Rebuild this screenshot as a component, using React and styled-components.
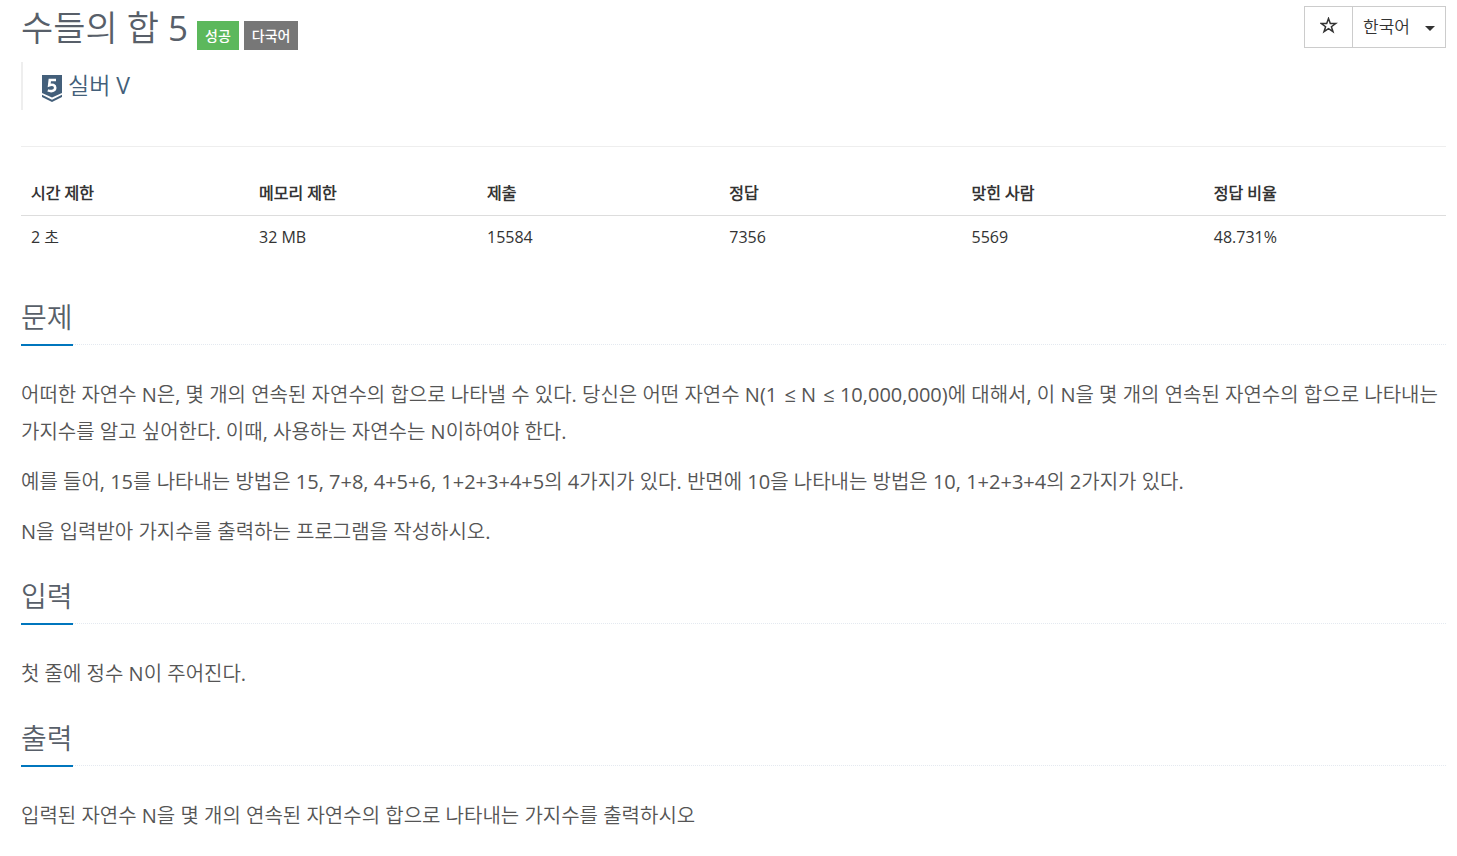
import React from 'react';
import styled, { createGlobalStyle } from 'styled-components';

const GlobalStyle = createGlobalStyle`
  * {
    box-sizing: border-box;
  }

  body {
    margin: 0;
    background: #fff;
    color: #333;
    font-family: 'Open Sans', 'Noto Sans CJK KR DemiLight', 'Noto Sans CJK KR', sans-serif;
    font-size: 16px;
    font-weight: 400;
    line-height: 24px;
  }
`;

const stats = [
  { label: '시간 제한', value: '2 초', width: 16 },
  { label: '메모리 제한', value: '32 MB', width: 16 },
  { label: '제출', value: '15584', width: 17 },
  { label: '정답', value: '7356', width: 17 },
  { label: '맞힌 사람', value: '5569', width: 17 },
  { label: '정답 비율', value: '48.731%', width: 17 },
];

const lessEqual = '\u200a≤';

const sections = [
  {
    title: '문제',
    paragraphs: [
      `어떠한 자연수 N은, 몇 개의 연속된 자연수의 합으로 나타낼 수 있다. 당신은 어떤 자연수 N(1 ${lessEqual} N ${lessEqual} 10,000,000)에 대해서, 이 N을 몇 개의 연속된 자연수의 합으로 나타내는 가지수를 알고 싶어한다. 이때, 사용하는 자연수는 N이하여야 한다.`,
      '예를 들어, 15를 나타내는 방법은 15, 7+8, 4+5+6, 1+2+3+4+5의 4가지가 있다. 반면에 10을 나타내는 방법은 10, 1+2+3+4의 2가지가 있다.',
      'N을 입력받아 가지수를 출력하는 프로그램을 작성하시오.',
    ],
  },
  { title: '입력', paragraphs: ['첫 줄에 정수 N이 주어진다.'] },
  {
    title: '출력',
    paragraphs: ['입력된 자연수 N을 몇 개의 연속된 자연수의 합으로 나타내는 가지수를 출력하시오'],
  },
];

const StarIcon = () => (
  <svg width='18' height='18' viewBox='0 0 18 18' fill='none' aria-hidden='true'>
    <path
      d='M8.5 1.5 L10.3 6.5 H15.7 L11.4 9.7 L13 14.7 L8.5 11.7 L4 14.7 L5.6 9.7 L1.3 6.5 H6.7 Z'
      stroke='#333'
      strokeWidth='1.5'
    />
  </svg>
);

const TierIcon = () => (
  <svg width='20' height='27' viewBox='0 0 20 27' aria-hidden='true'>
    <path d='M0 0 H20 V18 L10 22.5 L0 18 Z' fill='#435f7a' />
    <path d='M0 19.8 L10 24.8 L20 19.8 V22 L10 27 L0 22 Z' fill='#435f7a' />
    <path
      d='M14 5 H7.8 L7.2 10.2 C10.5 9 13.2 10 13.2 12.7 C13.2 15.8 9.6 16.9 5.8 15.4'
      fill='none'
      stroke='#fff'
      strokeWidth='2.6'
    />
  </svg>
);

export default function App() {
  return (
    <>
      <GlobalStyle />
      <Page>
        <Header>
          <div>
            <TitleRow>
              <Title>수들의 합 5</Title>
              <Badge $color='#5cb85c'>성공</Badge>
              <Badge $color='#777'>다국어</Badge>
            </TitleRow>
            <Tier>
              <TierIcon />
              <TierName>실버 V</TierName>
            </Tier>
          </div>
          <Toolbar>
            <StarButton type='button' aria-label='즐겨찾기'>
              <StarIcon />
            </StarButton>
            <LanguageField>
              <LanguageSelect aria-label='언어' defaultValue='ko'>
                <option value='ko'>한국어</option>
              </LanguageSelect>
              <Caret />
            </LanguageField>
          </Toolbar>
        </Header>
        <StatsTable>
          <thead>
            <tr>
              {stats.map(({ label, width }) => (
                <HeadCell key={label} scope='col' $width={width}>
                  {label}
                </HeadCell>
              ))}
            </tr>
          </thead>
          <tbody>
            <tr>
              {stats.map(({ label, value }) => (
                <Cell key={label}>{value}</Cell>
              ))}
            </tr>
          </tbody>
        </StatsTable>
        {sections.map(({ title, paragraphs }) => (
          <Section key={title}>
            <Headline>
              <HeadlineText>{title}</HeadlineText>
            </Headline>
            {paragraphs.map((text) => (
              <Paragraph key={text}>{text}</Paragraph>
            ))}
          </Section>
        ))}
      </Page>
    </>
  );
}

const Page = styled.main`
  padding: 6px 11px 0 21px;
`;

const Header = styled.header`
  display: flex;
  justify-content: space-between;
  align-items: flex-start;
  padding-bottom: 36px;
  border-bottom: 1px solid #eee;
`;

const TitleRow = styled.div`
  display: flex;
  align-items: flex-end;
  gap: 5px;
  height: 44px;
`;

const Title = styled.h1`
  margin: 0 4px 0 0;
  color: #585f69;
  font-size: 35px;
  font-weight: 400;
  line-height: 44px;
`;

const Badge = styled.span`
  padding: 0 8px;
  background: ${(props) => props.$color};
  color: #fff;
  font-family: 'Noto Sans CJK KR', sans-serif;
  font-size: 14px;
  font-weight: 500;
  line-height: 29px;
`;

const Tier = styled.div`
  display: flex;
  align-items: flex-start;
  gap: 6px;
  height: 48px;
  margin-top: 12px;
  padding: 13px 0 0 19px;
  border-left: 2px solid #eee;
  color: #435f7a;
  font-size: 23px;
`;

const TierName = styled.span`
  line-height: 20px;
`;

const Toolbar = styled.div`
  display: flex;
  height: 42px;
  border: 1px solid #ccc;
`;

const StarButton = styled.button`
  display: flex;
  align-items: center;
  justify-content: center;
  width: 48px;
  padding: 0 0 2px;
  border: 0;
  border-right: 1px solid #ccc;
  background: #fff;
  cursor: pointer;
`;

const LanguageField = styled.div`
  position: relative;
  display: flex;
`;

const LanguageSelect = styled.select`
  appearance: none;
  padding: 0 35px 2px 10px;
  border: 0;
  border-radius: 0;
  background: #fff;
  color: #333;
  font-family: inherit;
  font-size: 17px;
  font-weight: 400;
  cursor: pointer;
`;

const Caret = styled.span`
  position: absolute;
  top: 19px;
  right: 10px;
  border: 5px solid transparent;
  border-top-color: #333;
  border-bottom: 0;
  pointer-events: none;
`;

const StatsTable = styled.table`
  width: 100%;
  margin: 24px 0 41px;
  border-collapse: collapse;
  table-layout: fixed;
`;

const HeadCell = styled.th`
  width: ${(props) => props.$width}%;
  padding: 10px;
  border-bottom: 1px solid #ddd;
  font-weight: 600;
  text-align: left;
`;

const Cell = styled.td`
  padding: 9px 10px 10px;
`;

const Section = styled.section`
  margin-bottom: 29px;
`;

const Headline = styled.div`
  display: flex;
  margin-bottom: 31px;
  border-bottom: 1px dotted #e4e9f0;
`;

const HeadlineText = styled.h2`
  margin: 0 0 -2px;
  padding-bottom: 10px;
  border-bottom: 2px solid #0076bd;
  color: #585f69;
  font-size: 28px;
  font-weight: 400;
  line-height: 34px;
`;

const Paragraph = styled.p`
  margin: 0 0 13px;
  color: #555;
  font-size: 20px;
  line-height: 37px;
`;
